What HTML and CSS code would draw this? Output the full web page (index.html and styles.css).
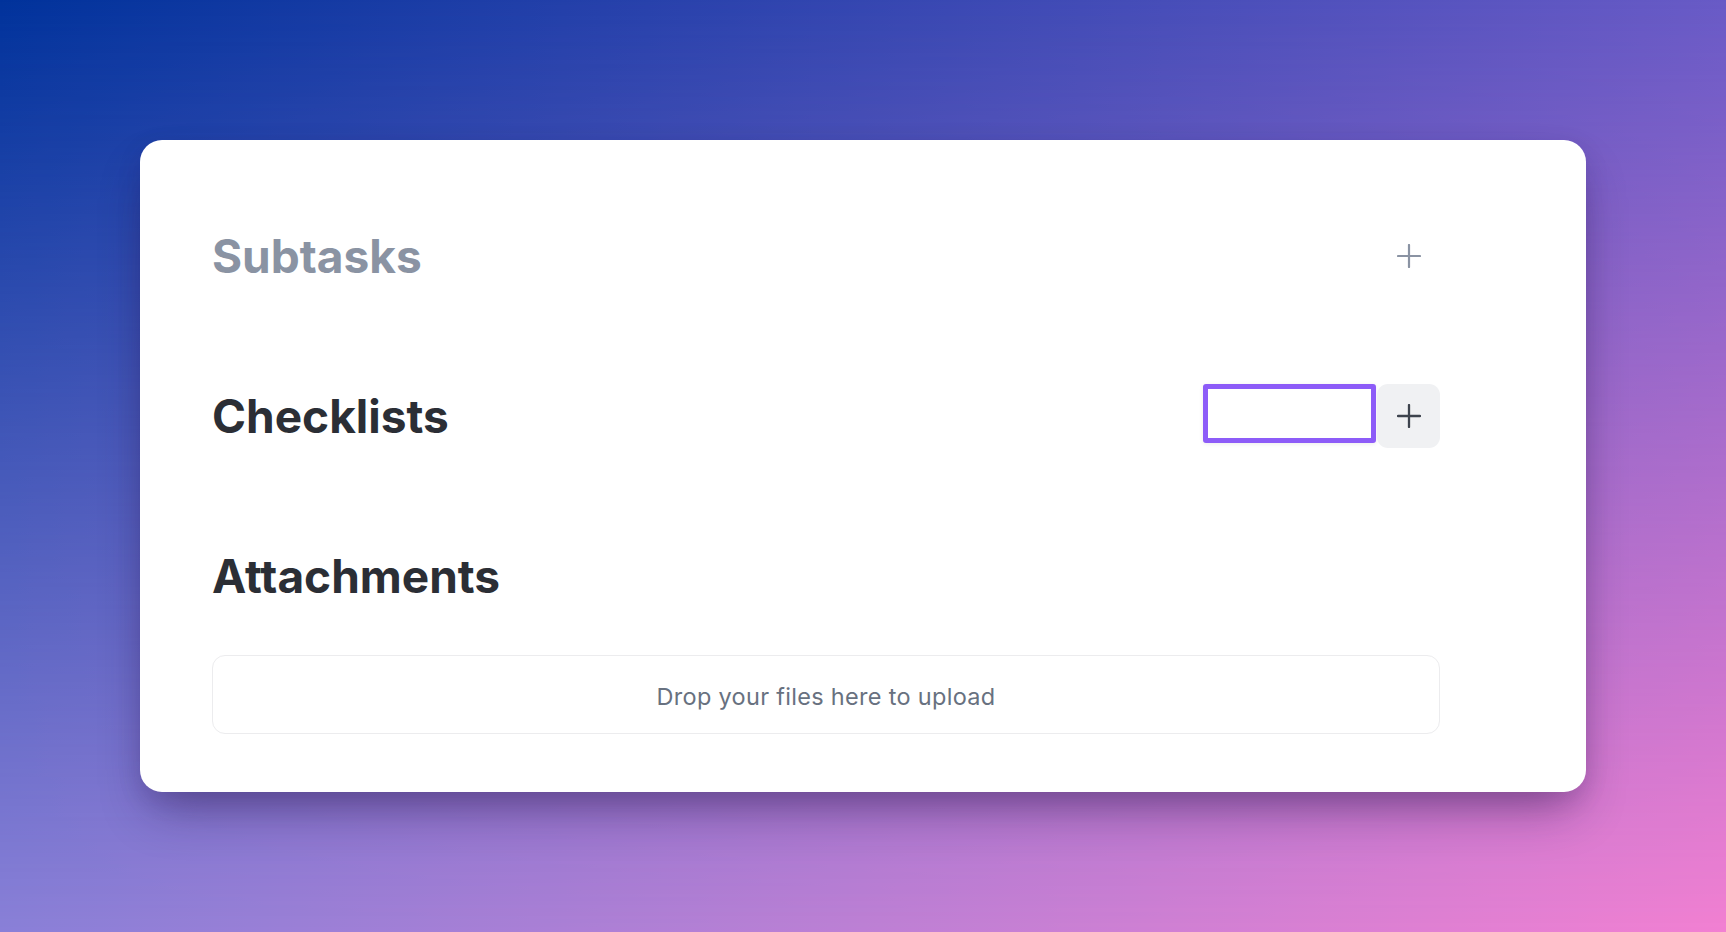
FILE: index.html
```html
<!DOCTYPE html>
<html lang="en">
<head>
<meta charset="utf-8">
<title>Task details</title>
<link rel="stylesheet" href="styles.css">
</head>
<body>
<main class="card">
  <section class="section">
    <div class="section-head">
      <h2 class="title title-muted">Subtasks</h2>
      <button class="icon-btn icon-btn-ghost" aria-label="Add subtask">
        <svg viewBox="0 0 24 24" width="24" height="24"><path d="M12 1V23M1 12H23"/></svg>
      </button>
    </div>
  </section>
  <section class="section">
    <div class="section-head">
      <h2 class="title">Checklists</h2>
      <div class="controls">
        <input class="text-input" type="text" aria-label="Checklist name">
        <button class="icon-btn icon-btn-filled" aria-label="Add checklist">
          <svg viewBox="0 0 24 24" width="24" height="24"><path d="M12 1V23M1 12H23"/></svg>
        </button>
      </div>
    </div>
  </section>
  <section class="section">
    <div class="section-head">
      <h2 class="title">Attachments</h2>
    </div>
    <div class="dropzone">Drop your files here to upload</div>
  </section>
</main>
</body>
</html>
```
FILE: styles.css
```css
* { box-sizing: border-box; }
html, body { margin: 0; height: 100%; }
body {
  position: relative;
  min-height: 932px;
  padding: 140px;
  font-family: Inter, "Noto Sans", "Liberation Sans", sans-serif;
  background: linear-gradient(to right, #8a80d8, #f280d2);
  overflow: hidden;
}
body::before {
  content: "";
  position: absolute;
  inset: 0;
  background: linear-gradient(to right, #00329b, #685ac6);
  -webkit-mask-image: linear-gradient(to bottom, #000, transparent);
  mask-image: linear-gradient(to bottom, #000, transparent);
  z-index: 0;
}
.card {
  position: relative;
  z-index: 1;
  background: #fff;
  border-radius: 22px;
  padding: 84px 146px 58px 72px;
  display: flex;
  flex-direction: column;
  gap: 96px;
  box-shadow: 0 26px 50px -12px rgba(40, 20, 70, 0.45), 0 8px 24px rgba(30, 20, 80, 0.12);
}
.section { display: flex; flex-direction: column; }
.section-head {
  height: 64px;
  display: flex;
  align-items: center;
  justify-content: space-between;
}
.title {
  margin: 0;
  font-size: 46px;
  font-weight: 700;
  letter-spacing: 0;
  color: #2b2e35;
  line-height: 1;
}
.title-muted { color: #8a93a3; }
.controls {
  display: flex;
  align-items: flex-start;
  gap: 1px;
  height: 64px;
}
.text-input {
  width: 173px;
  height: 59px;
  margin: 0;
  border: 5px solid #8d5cf8;
  border-radius: 3px;
  background: #fff;
  box-shadow: 0 1px 4px rgba(0, 0, 0, 0.08);
  outline: none;
}
.icon-btn {
  width: 63px;
  height: 64px;
  border: 0;
  padding: 0;
  border-radius: 11px;
  display: flex;
  align-items: center;
  justify-content: center;
  background: transparent;
}
.icon-btn svg { fill: none; stroke-linecap: round; }
.icon-btn-ghost svg { stroke: #8a93a3; stroke-width: 2.2; }
.icon-btn-filled { background: #f0f1f3; }
.icon-btn-filled svg { stroke: #3d434d; stroke-width: 2.3; }
.dropzone {
  margin-top: 47px;
  height: 79px;
  padding-top: 3px;
  border: 1.5px solid #ececee;
  border-radius: 13px;
  display: flex;
  align-items: center;
  justify-content: center;
  font-size: 23.5px;
  letter-spacing: 0.3px;
  color: #687180;
}
```
